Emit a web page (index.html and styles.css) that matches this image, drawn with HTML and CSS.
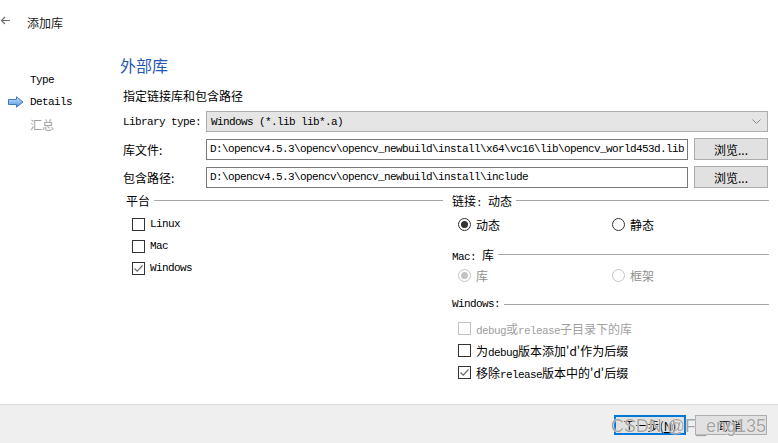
FILE: index.html
```html
<!DOCTYPE html>
<html lang="zh-CN">
<head>
    <meta charset="UTF-8">
    <title>添加库</title>
    <link rel="stylesheet" href="styles.css">
</head>
<body>
    <div class="wizard">
        <header class="topbar">
            <svg class="back" width="10" height="9" viewBox="0 0 10 9">
                <path d="M10 4.5H1.5M5 1L1.5 4.5L5 8" fill="none" stroke="#6f6f6f" stroke-width="1.2"/>
            </svg>
            <span class="wizard-title">添加库</span>
        </header>

        <div class="main">
            <!-- Step list -->
            <nav class="steps">
                <div class="step en">Type</div>
                <div class="step current">
                    <svg class="step-arrow" width="16" height="12" viewBox="0 0 16 12">
                        <defs>
                            <linearGradient id="arrowFill" x1="0" y1="0" x2="0" y2="1">
                                <stop offset="0" stop-color="#cfe5fb"/>
                                <stop offset="1" stop-color="#4f94dc"/>
                            </linearGradient>
                        </defs>
                        <path d="M0.5 3.5H8.5V0.8L15 6L8.5 11.2V8.5H0.5Z" fill="url(#arrowFill)" stroke="#3f78c0" stroke-width="1"/>
                    </svg>
                    <span class="en">Details</span>
                </div>
                <div class="step muted">汇总</div>
            </nav>

            <section class="page">
                <h1 class="page-title">外部库</h1>
                <p class="subtitle">指定链接库和包含路径</p>

                <div class="form">
                    <label class="en">Library type:</label>
                    <div class="combo">
                        <span class="en">Windows (*.lib lib*.a)</span>
                        <svg width="9" height="5" viewBox="0 0 9 5"><path d="M0.5 0.5L4.5 4.5L8.5 0.5" fill="none" stroke="#888" stroke-width="1"/></svg>
                    </div>

                    <label>库文件:</label>
                    <div class="field en">D:\opencv4.5.3\opencv\opencv_newbuild\install\x64\vc16\lib\opencv_world453d.lib</div>
                    <button class="btn browse">浏览...</button>

                    <label>包含路径:</label>
                    <div class="field en">D:\opencv4.5.3\opencv\opencv_newbuild\install\include</div>
                    <button class="btn browse">浏览...</button>
                </div>

                <div class="groups">
                    <!-- Platform -->
                    <div class="group">
                        <div class="group-title"><span>平台</span><i class="rule"></i></div>
                        <div class="options first">
                            <div class="opt"><span class="box"></span><span class="en">Linux</span></div>
                            <div class="opt"><span class="box"></span><span class="en">Mac</span></div>
                            <div class="opt">
                                <span class="box">
                                    <svg width="11" height="11" viewBox="0 0 11 11"><path d="M1.5 5.5L4.2 8.2L9.5 2.5" fill="none" stroke="#6a6a6a" stroke-width="1.2"/></svg>
                                </span>
                                <span class="en">Windows</span>
                            </div>
                        </div>
                    </div>

                    <!-- Linkage / Mac / Windows -->
                    <div class="group">
                        <div class="group-title"><span>链接<span class="en">:&nbsp;</span>动态</span><i class="rule"></i></div>
                        <div class="radios first">
                            <div class="opt"><span class="radio on"></span>动态</div>
                            <div class="opt"><span class="radio"></span>静态</div>
                        </div>

                        <div class="group-title mac"><span><span class="en">Mac:&nbsp;</span>库</span><i class="rule"></i></div>
                        <div class="radios disabled">
                            <div class="opt"><span class="radio on"></span>库</div>
                            <div class="opt"><span class="radio"></span>框架</div>
                        </div>

                        <div class="group-title win"><span class="en">Windows:</span><i class="rule"></i></div>
                        <div class="options first">
                            <div class="opt disabled"><span class="box"></span><span><span class="en">debug</span>或<span class="en">release</span>子目录下的库</span></div>
                            <div class="opt"><span class="box"></span><span>为<span class="en">debug</span>版本添加'd'作为后缀</span></div>
                            <div class="opt">
                                <span class="box">
                                    <svg width="11" height="11" viewBox="0 0 11 11"><path d="M1.5 5.5L4.2 8.2L9.5 2.5" fill="none" stroke="#6a6a6a" stroke-width="1.2"/></svg>
                                </span>
                                <span>移除<span class="en">release</span>版本中的'd'后缀</span>
                            </div>
                        </div>
                    </div>
                </div>
            </section>
        </div>

        <footer class="buttons">
            <button class="btn primary">下一步(<u>N</u>)</button>
            <button class="btn">取消</button>
        </footer>

        <div class="watermark">CSDN @F_eng135</div>
    </div>
</body>
</html>
```

FILE: styles.css
```css
/* --- Base --- */
body {
    margin: 0;
    background: #ffffff;
    color: #000;
    font-family: "Noto Sans CJK SC", sans-serif;
    font-size: 12px;
}

/* Latin runs in the dialog use a narrow mono face */
.en {
    font-family: "Liberation Mono", monospace;
    font-size: 11px;
    letter-spacing: -0.6px;
}

.wizard {
    position: relative;
    width: 778px;
    height: 443px;
    display: flex;
    flex-direction: column;
    overflow: hidden;
}

/* --- Top bar --- */
.topbar {
    height: 44px;
    display: flex;
    align-items: center;
    flex-shrink: 0;
}

.back {
    margin: -4px 17px 0 0;
}

.wizard-title {
    color: #1a1a1a;
}

.main {
    flex: 1;
    display: flex;
}

/* --- Step list --- */
.steps {
    width: 120px;
    padding-top: 25px;
    box-sizing: border-box;
    flex-shrink: 0;
}

.step {
    height: 22px;
    display: flex;
    align-items: center;
    padding-left: 30px;
}

.step.current {
    padding-left: 8px;
}

.step-arrow {
    width: 16px;
    margin-right: 6px;
}

.step.muted {
    color: #a0a0a0;
}

/* --- Page --- */
.page {
    flex: 1;
    padding-top: 10px;
}

.page-title {
    margin: 0;
    font-size: 16px;
    font-weight: normal;
    line-height: 22px;
    color: #2456b3;
}

.subtitle {
    margin: 12px 0 0 3px;
    line-height: 16px;
}

.form {
    display: grid;
    grid-template-columns: 77px 482px 74px;
    grid-template-rows: 21px 22px 22px;
    column-gap: 6px;
    row-gap: 6px;
    align-items: center;
    margin: 7px 0 0 3px;
}

.form label {
    white-space: nowrap;
}

.combo {
    grid-column: 2 / 4;
    height: 21px;
    box-sizing: border-box;
    display: flex;
    align-items: center;
    justify-content: space-between;
    padding: 0 6px 0 4px;
    background: #e5e5e5;
    border: 1px solid #adadad;
}

.field {
    height: 21px;
    box-sizing: border-box;
    display: flex;
    align-items: center;
    padding: 0 3px;
    border: 1px solid #7a7a7a;
    white-space: nowrap;
    overflow: hidden;
}

.btn {
    height: 20px;
    width: 72px;
    padding: 0;
    font-family: "Noto Sans CJK SC", sans-serif;
    font-size: 12px;
    color: #000;
    background: #e1e1e1;
    border: 1px solid #adadad;
    box-sizing: border-box;
}

.btn.browse {
    width: 74px;
    height: 22px;
}

.btn.primary {
    border: 2px solid #0078d7;
}

/* --- Option groups --- */
.groups {
    display: flex;
    gap: 9px;
    margin: 4px 0 0 6px;
}

.group {
    width: 317px;
}

.group-title {
    height: 16px;
    display: flex;
    align-items: center;
}

.group-title.mac {
    margin-top: 11px;
}

.group-title.win {
    margin-top: 10px;
}

.rule {
    flex: 1;
    height: 1px;
    margin-left: 4px;
    background: #a6a6a6;
}

.options,
.radios {
    padding-left: 6px;
}

.options.first,
.radios.first {
    margin-top: 5px;
}

.radios {
    display: grid;
    grid-template-columns: 154px auto;
}

.radios.disabled {
    margin-top: 2px;
    color: #8f8f8f;
}

.opt {
    height: 22px;
    display: flex;
    align-items: center;
}

.opt.disabled {
    color: #a0a0a0;
}

.box {
    width: 13px;
    height: 13px;
    box-sizing: border-box;
    border: 1px solid #333;
    background: #fff;
    margin-right: 5px;
    display: flex;
    align-items: center;
    justify-content: center;
}

.opt.disabled .box {
    border-color: #c4c4c4;
}

.radio {
    width: 13px;
    height: 13px;
    box-sizing: border-box;
    border: 1px solid #333;
    border-radius: 50%;
    margin-right: 5px;
    display: flex;
    align-items: center;
    justify-content: center;
}

.radio.on::after {
    content: "";
    width: 7px;
    height: 7px;
    border-radius: 50%;
    background: #333;
}

.radios.disabled .radio {
    border-color: #c4c4c4;
}

.radios.disabled .radio.on::after {
    background: #c4c4c4;
}

/* --- Footer --- */
.buttons {
    height: 39px;
    flex-shrink: 0;
    box-sizing: border-box;
    display: flex;
    justify-content: flex-end;
    align-items: flex-start;
    gap: 9px;
    padding: 10px 11px 0 0;
    background: #efefef;
    border-top: 1px solid #dadada;
}

/* CSDN overlay */
.watermark {
    position: absolute;
    right: 12px;
    bottom: 6px;
    font-family: "Liberation Sans", sans-serif;
    font-size: 18px;
    color: rgba(100, 100, 100, 0.6);
    text-shadow: 0 0 1px #fff, 0 0 1px #fff;
    pointer-events: none;
}
```
